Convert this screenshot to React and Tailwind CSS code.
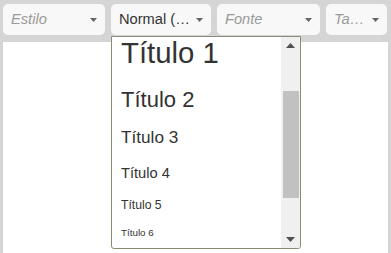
import React from 'react';

const font = { fontFamily: '"Liberation Sans", Arial, sans-serif' };

function Caret() {
  return (
    <svg width="7" height="4" viewBox="0 0 7 4" className="shrink-0">
      <path d="M0 0 L7 0 L3.5 4 Z" fill="#666" />
    </svg>
  );
}

function Combo({ label, placeholder, width }) {
  return (
    <div
      className={`flex h-[31px] items-center justify-between gap-[4px] rounded-[5px] bg-[#f8f8f8] pl-[8px] pr-[8px] ${width}`}
    >
      <span
        className={`whitespace-nowrap text-[14.67px] leading-none ${
          placeholder ? 'italic text-[#9a9a9a]' : 'text-[#333]'
        }`}
      >
        {label}
      </span>
      <Caret />
    </div>
  );
}

export default function App() {
  return (
    <div style={font} className="flex h-[253px] w-[391px] flex-col bg-[#d5d5d5] px-[3px]">
      {/* toolbar */}
      <div className="flex h-[42px] items-start gap-[6px] pt-[4px]">
        <Combo label="Estilo" placeholder width="w-[102px]" />
        <Combo label="Normal (…" width="w-[100px]" />
        <Combo label="Fonte" placeholder width="w-[103px]" />
        <Combo label="Ta…" placeholder width="w-[61px]" />
      </div>

      {/* editor area */}
      <div className="relative flex-1 bg-white">
        {/* formato dropdown */}
        <div className="absolute left-[108px] top-[-6px] flex h-[213px] w-[190px] overflow-hidden rounded-b-[3px] border border-[#8b8b72] bg-white">
          <div className="flex flex-1 flex-col pl-[9px] text-[#333]">
            <div className="mt-[-1px] h-[34px] text-[29.33px] leading-[34px]">Título 1</div>
            <div className="mt-[17px] h-[25px] text-[22px] leading-[25px]">Título 2</div>
            <div className="mt-[15px] h-[20px] text-[17.2px] leading-[20px]">Título 3</div>
            <div className="mt-[18px] h-[17px] text-[14.67px] leading-[17px]">Título 4</div>
            <div className="mt-[16px] h-[14px] text-[12.2px] leading-[14px]">Título 5</div>
            <div className="mt-[15px] h-[11px] text-[9.8px] leading-[11px]">Título 6</div>
          </div>

          {/* scrollbar */}
          <div className="flex w-[19px] flex-col items-center bg-[#f0f0f0]">
            <div className="flex h-[17px] w-full items-center justify-center">
              <svg width="9" height="5" viewBox="0 0 9 5">
                <path d="M0 5 L9 5 L4.5 0 Z" fill="#505050" />
              </svg>
            </div>
            <div className="mt-[37px] h-[107px] w-[16px] bg-[#c1c1c1]" />
            <div className="flex-1" />
            <div className="flex h-[17px] w-full items-center justify-center">
              <svg width="9" height="5" viewBox="0 0 9 5">
                <path d="M0 0 L9 0 L4.5 5 Z" fill="#505050" />
              </svg>
            </div>
          </div>
        </div>
      </div>
    </div>
  );
}
